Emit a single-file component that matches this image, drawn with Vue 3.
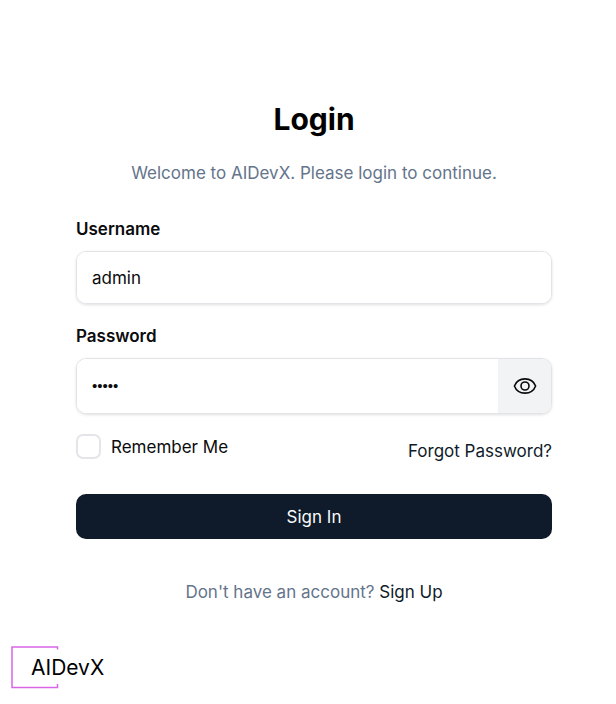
<script setup>
import { ref } from 'vue'

const username = ref('admin')
const password = ref('admin')
const remember = ref(false)
const visible = ref(false)
</script>

<template>
  <div class="page">
    <main class="login">
      <header class="intro">
        <h1>Login</h1>
        <p>Welcome to AIDevX. Please login to continue.</p>
      </header>

      <form class="form" @submit.prevent>
        <div class="field">
          <label class="label" for="username">Username</label>
          <div class="control">
            <input id="username" v-model="username" type="text" autocomplete="username" />
          </div>
        </div>

        <div class="field">
          <label class="label" for="password">Password</label>
          <div class="control tall">
            <input
              id="password"
              v-model="password"
              :type="visible ? 'text' : 'password'"
              autocomplete="current-password"
            />
            <button
              class="toggle"
              type="button"
              aria-label="Show password"
              :aria-pressed="visible"
              @click="visible = !visible"
            >
              <svg width="24" height="24" viewBox="0 0 24 24" stroke-width="1.6" aria-hidden="true">
                <path d="M1.400 12C3 7.800 7.200 4.900 12 4.900S21 7.800 22.600 12C21 16.200 16.800 19.100 12 19.100S3 16.200 1.400 12Z" />
                <circle cx="12" cy="12" r="4" />
              </svg>
            </button>
          </div>
        </div>

        <div class="options">
          <label class="remember" for="remember">
            <input id="remember" v-model="remember" type="checkbox" />
            <span>Remember Me</span>
          </label>
          <a class="forgot" href="#forgot">Forgot Password?</a>
        </div>

        <button class="submit" type="submit">Sign In</button>
      </form>

      <p class="signup">Don't have an account? <a href="#signup">Sign Up</a></p>
    </main>

    <footer class="brand">
      <div class="logo">
        <svg width="48" height="43" viewBox="0 0 48 43" stroke-width="1.5" aria-hidden="true">
          <path d="M46.500 3.500V1H1V41.500H46.500V38" />
        </svg>
        <span class="logo-name">AIDevX</span>
      </div>
    </footer>
  </div>
</template>

<style>
body {
  background: #fff;
}
</style>

<style scoped>
.page {
  font-family: Inter, "Liberation Sans", sans-serif;
  font-size: 17px;
  line-height: 24px;
  color: #0b0b0d;
}

.page * {
  box-sizing: border-box;
}

.login {
  padding: 99px 64px 0 76px;
}

.intro {
  text-align: center;
}

h1 {
  margin: 0 0 22px;
  font-size: 30px;
  line-height: 40px;
  font-weight: 700;
  color: #000;
}

p {
  margin: 0;
  color: #64748b;
}

.form {
  display: flex;
  flex-direction: column;
  margin-top: 32px;
}

.field {
  margin-bottom: 20px;
}

.label {
  display: block;
  margin-bottom: 10px;
  font-weight: 600;
}

.control {
  display: flex;
  height: 53px;
  overflow: hidden;
  border: 1px solid #e2e4e8;
  border-radius: 10px;
  box-shadow: 0 1px 3px rgba(0, 0, 0, 0.12);
}

.control.tall {
  height: 56px;
}

.control input {
  flex: 1;
  min-width: 0;
  padding: 0 15px;
  border: 0;
  outline: 0;
  background: #fff;
  font: inherit;
  color: inherit;
}

.control input[type="password"] {
  font-family: "Liberation Sans", sans-serif;
  font-size: 15px;
}

.toggle {
  display: grid;
  place-items: center;
  width: 53px;
  padding: 0;
  border: 0;
  background: #f1f3f5;
}

.toggle svg,
.logo svg {
  display: block;
  fill: none;
}

.toggle svg {
  stroke: #0b0b0d;
}

.options {
  display: flex;
  align-items: flex-start;
  justify-content: space-between;
}

.remember {
  display: flex;
  align-items: center;
  gap: 10px;
}

.remember input {
  appearance: none;
  width: 25px;
  height: 25px;
  margin: 0;
  border: 2px solid #e4e5e9;
  border-radius: 7px;
  background: #fff;
}

.remember input:checked {
  background: #0f1b2a;
}

a {
  color: #0f1b2a;
  text-decoration: none;
}

.forgot {
  margin-top: 5px;
}

.submit {
  height: 45px;
  margin-top: 31px;
  border: 0;
  border-radius: 10px;
  background: #0f1b2a;
  font: inherit;
  color: #f8fafc;
}

.signup {
  margin-top: 41px;
  text-align: center;
}

.brand {
  padding: 42px 11px 0;
}

.logo {
  display: grid;
  align-items: center;
  justify-content: start;
}

.logo svg,
.logo-name {
  grid-area: 1 / 1;
}

.logo svg {
  stroke: #d966e8;
}

.logo-name {
  margin-left: 20px;
  background: #fff;
  font-size: 21px;
  color: #000;
}
</style>
